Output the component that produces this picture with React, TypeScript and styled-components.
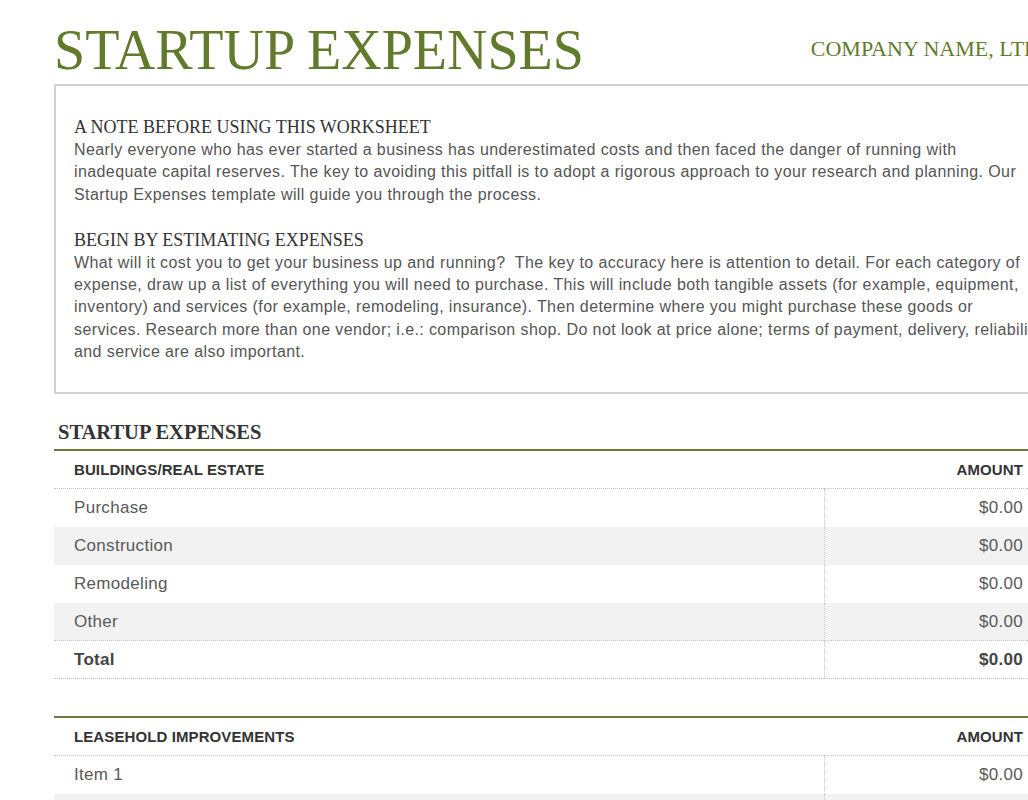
import React from 'react';
import styled, { createGlobalStyle } from 'styled-components';

const GlobalStyle = createGlobalStyle`
  html, body {
    margin: 0;
    padding: 0;
    background: #ffffff;
    overflow: hidden;
  }
`;

const Page = styled.div`
  width: 976px;
  padding: 22px 0 0 54px;
  font-family: "Liberation Sans", Arial, sans-serif;
`;

const Header = styled.header`
  display: flex;
  justify-content: space-between;
  align-items: flex-start;
  height: 62px;
`;

const Title = styled.h1`
  margin: 0;
  font-family: "Liberation Serif", "Times New Roman", serif;
  font-weight: normal;
  font-size: 56px;
  line-height: 56px;
  color: #627a2c;
`;

const CompanyName = styled.div`
  margin: 14px -10px 0 0;
  font-family: "Liberation Serif", "Times New Roman", serif;
  font-size: 22px;
  line-height: 26px;
  color: #627a2c;
  white-space: nowrap;
`;

const NoteBox = styled.section`
  border: 2px solid #d2d2d2;
  padding: 30px 18px 29px 18px;
`;

const NoteHeading = styled.h2`
  margin: 0 0 1px;
  font-family: "Liberation Serif", "Times New Roman", serif;
  font-weight: normal;
  font-size: 18px;
  line-height: 22px;
  color: #333333;
`;

const NoteText = styled.p`
  margin: 0 0 23px;
  font-size: 16px;
  letter-spacing: 0.4px;
  line-height: 22.25px;
  color: #555555;
  white-space: nowrap;
  &:last-child {
    margin-bottom: 0;
  }
`;

const SectionTitle = styled.h3`
  margin: 21px 0 0 4px;
  font-family: "Liberation Serif", "Times New Roman", serif;
  font-weight: bold;
  font-size: 20.5px;
  line-height: 34px;
  color: #333333;
`;

const Table = styled.div<{ $gap?: boolean }>`
  display: grid;
  grid-template-columns: 1fr 206px;
  border-top: 2px solid #6b7b40;
  margin-top: ${(p) => (p.$gap ? '37px' : '0')};
`;

const Cell = styled.div<{ $amount?: boolean; $head?: boolean; $shade?: boolean; $bold?: boolean; $rule?: boolean }>`
  height: ${(p) => (p.$head ? '38px' : '38px')};
  display: flex;
  align-items: center;
  justify-content: ${(p) => (p.$amount ? 'flex-end' : 'flex-start')};
  padding: ${(p) => (p.$amount ? '0 7px 0 0' : '0 0 0 20px')};
  box-sizing: border-box;
  background: ${(p) => (p.$shade ? '#f2f2f2' : 'transparent')};
  font-size: ${(p) => (p.$head ? '15px' : '17px')};
  letter-spacing: ${(p) => (p.$head ? '0.1px' : '0.3px')};
  font-weight: ${(p) => (p.$head || p.$bold ? 'bold' : 'normal')};
  color: ${(p) => (p.$head ? '#333333' : p.$bold ? '#444444' : '#595959')};
  border-bottom: ${(p) => (p.$rule ? '1px dotted #c6c6c6' : '1px solid transparent')};
  border-left: ${(p) => (p.$amount && !p.$head ? '1px dotted #c8c8c8' : 'none')};
`;

interface IRow {
  label: string;
  amount: string;
  shade?: boolean;
  bold?: boolean;
  rule?: boolean;
}

const Row = ({ label, amount, shade, bold, rule }: IRow) => (
  <>
    <Cell $shade={shade} $bold={bold} $rule={rule}>{label}</Cell>
    <Cell $amount $shade={shade} $bold={bold} $rule={rule}>{amount}</Cell>
  </>
);

const buildings: IRow[] = [
  { label: 'Purchase', amount: '$0.00' },
  { label: 'Construction', amount: '$0.00', shade: true },
  { label: 'Remodeling', amount: '$0.00' },
  { label: 'Other', amount: '$0.00', shade: true, rule: true },
  { label: 'Total', amount: '$0.00', bold: true, rule: true },
];

const leasehold: IRow[] = [
  { label: 'Item 1', amount: '$0.00' },
  { label: 'Item 2', amount: '$0.00', shade: true },
  { label: 'Item 3', amount: '$0.00' },
];

const App = () => (
  <>
    <GlobalStyle />
    <Page>
      <Header>
        <Title>STARTUP EXPENSES</Title>
        <CompanyName>COMPANY NAME, LTD</CompanyName>
      </Header>

      <NoteBox>
        <NoteHeading>A NOTE BEFORE USING THIS WORKSHEET</NoteHeading>
        <NoteText>
          Nearly everyone who has ever started a business has underestimated costs and then faced the danger of running with<br />
          inadequate capital reserves. The key to avoiding this pitfall is to adopt a rigorous approach to your research and planning. Our<br />
          Startup Expenses template will guide you through the process.
        </NoteText>
        <NoteHeading>BEGIN BY ESTIMATING EXPENSES</NoteHeading>
        <NoteText>
          What will it cost you to get your business up and running?&nbsp; The key to accuracy here is attention to detail. For each category of<br />
          expense, draw up a list of everything you will need to purchase. This will include both tangible assets (for example, equipment,<br />
          inventory) and services (for example, remodeling, insurance). Then determine where you might purchase these goods or<br />
          services. Research more than one vendor; i.e.: comparison shop. Do not look at price alone; terms of payment, delivery, reliability,<br />
          and service are also important.
        </NoteText>
      </NoteBox>

      <SectionTitle>STARTUP EXPENSES</SectionTitle>
      <Table>
        <Cell $head $rule>BUILDINGS/REAL ESTATE</Cell>
        <Cell $head $amount $rule>AMOUNT</Cell>
        {buildings.map((r) => (
          <Row key={r.label} {...r} />
        ))}
      </Table>

      <Table $gap>
        <Cell $head $rule>LEASEHOLD IMPROVEMENTS</Cell>
        <Cell $head $amount $rule>AMOUNT</Cell>
        {leasehold.map((r) => (
          <Row key={r.label} {...r} />
        ))}
      </Table>
    </Page>
  </>
);

export default App;
